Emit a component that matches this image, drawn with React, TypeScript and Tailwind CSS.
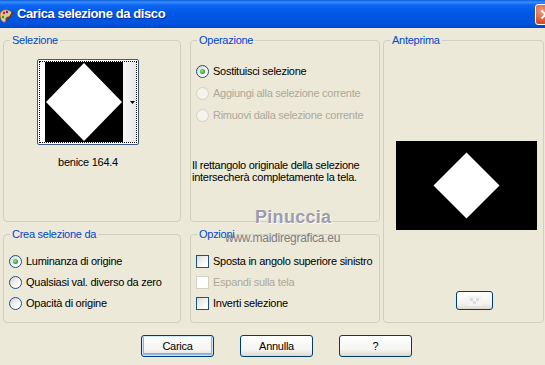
import clsx from "clsx";

const ui = "font-['Liberation_Sans',Arial,sans-serif] text-[11px] tracking-[-0.27px]";

function Radio({ label, checked, disabled }: { label: string; checked?: boolean; disabled?: boolean }) {
  return (
    <div className="flex h-[14px] items-center gap-[4px]">
      <span
        className={clsx(
          "flex size-[13px] shrink-0 items-center justify-center rounded-full border",
          disabled ? "border-[#d4d1c3] bg-[#f4f3ec]" : "border-[#1c5180] bg-[linear-gradient(135deg,#d8d5cb,#ffffff_75%)]",
        )}
      >
        {checked && <span className="size-[5px] rounded-full bg-[radial-gradient(circle_at_40%_40%,#9be69b,#21a121_70%)]" />}
      </span>
      <span className={clsx("whitespace-nowrap leading-[13px]", disabled ? "text-[#aca899]" : "text-black")}>{label}</span>
    </div>
  );
}

function Check({ label, disabled }: { label: string; disabled?: boolean }) {
  return (
    <div className="flex h-[14px] items-center gap-[4px]">
      <span
        className={clsx(
          "size-[13px] shrink-0 border",
          disabled ? "border-[#d4d1c3] bg-white" : "border-[#1c5180] bg-[linear-gradient(135deg,#dcdcd7,#ffffff_80%)]",
        )}
      />
      <span className={clsx("whitespace-nowrap leading-[13px]", disabled ? "text-[#aca899]" : "text-black")}>{label}</span>
    </div>
  );
}

function Group({ title, className, children }: { title: string; className?: string; children: React.ReactNode }) {
  return (
    <fieldset className={clsx("rounded-[4px] border border-[#d0d0bf]", className)}>
      <legend className="ml-[6px] px-[2px] leading-[13px] text-[#0046d5]">{title}</legend>
      {children}
    </fieldset>
  );
}

function XpButton({ children, primary }: { children?: React.ReactNode; primary?: boolean }) {
  return (
    <button
      type="button"
      className={clsx(
        "flex h-[22px] w-[73px] items-center justify-center rounded-[3px] border border-[#003c74] bg-[linear-gradient(#ffffff,#f4f4f0_70%,#dcd8cc)] leading-[13px] text-black",
        primary && "shadow-[inset_0_0_0_1px_#cee7ff,inset_0_-1px_0_2px_#8eb0e8]",
      )}
    >
      {children}
    </button>
  );
}

function Diamond() {
  return (
    <svg width="78" height="80" viewBox="0 0 78 80" className="block">
      <rect width="78" height="80" fill="#000" />
      <polygon points="39,1 77,40 39,79 1,40" fill="#fff" />
    </svg>
  );
}

function TitleBar() {
  return (
    <div className="relative flex h-[28px] items-center bg-[linear-gradient(#0a5cd8,#3a8dff_2px,#0d66f0_5px,#0058e6_45%,#0053dd_85%,#0045c8)]">
      <svg width="16" height="16" viewBox="0 0 16 16" className="ml-[-2px] mt-[1px]">
        <path d="M2 8c0-4 4-6 8-5s5 4 3 6-4 0-5 2 1 3-1 4-5-2-5-7z" fill="#e9c48a" stroke="#8a5a2a" strokeWidth="0.8" />
        <circle cx="6" cy="6" r="1.3" fill="#e02020" />
        <circle cx="9" cy="5" r="1.2" fill="#2040e0" />
        <circle cx="5" cy="10" r="1.2" fill="#20a020" />
        <path d="M9 14l6-9" stroke="#5a3a1a" strokeWidth="1.4" />
      </svg>
      <span className="ml-[3px] font-['Liberation_Sans',Arial,sans-serif] text-[13px] font-bold tracking-[-0.4px] text-white [text-shadow:1px_1px_0_#0a2a9a]">
        Carica selezione da disco
      </span>
      <div className="absolute left-[535px] top-[4px] flex h-[21px] w-[21px] items-center justify-center rounded-[3px] border border-white bg-[radial-gradient(circle_at_30%_30%,#f09a78,#d8532c_60%,#c0401a)]">
        <svg width="11" height="11" viewBox="0 0 11 11">
          <path d="M1.5 1.5l8 8M9.5 1.5l-8 8" stroke="#fff" strokeWidth="2" />
        </svg>
      </div>
    </div>
  );
}

export default function App() {
  return (
    <div className={clsx("relative h-[365px] w-[545px] overflow-hidden bg-[#ece9d8] text-black", ui)}>
      <TitleBar />
      <div className="pl-[3px] pt-[6px]">
        <div className="grid grid-cols-[178px_199px_164px] grid-rows-[188px_95px] gap-y-[6px]">
          <Group title="Selezione">
            <div className="ml-[33px] mt-[12px] flex w-[102px] flex-col items-center">
              <div className="h-[86px] w-[102px] rounded-[2px] border border-[#3c5a80] bg-white p-[1px]">
                <div className="flex h-full border border-dotted border-black">
                  <div className="w-[5px] bg-white" />
                  <Diamond />
                  <div className="flex flex-1 items-center justify-end bg-[linear-gradient(90deg,#f6f6f4,#e9e9e6)] pr-[1px]">
                    <svg width="5" height="3" viewBox="0 0 5 3">
                      <path d="M0 0h5L2.5 3z" fill="#000" />
                    </svg>
                  </div>
                </div>
              </div>
              <div className="mt-[11px] leading-[13px]">benice 164.4</div>
            </div>
          </Group>

          <Group title="Operazione" className="ml-[9px]">
            <div className="flex flex-col gap-[8px] pl-[5px] pt-[17px]">
              <Radio label="Sostituisci selezione" checked />
              <Radio label="Aggiungi alla selezione corrente" disabled />
              <Radio label="Rimuovi dalla selezione corrente" disabled />
            </div>
            <p className="mt-[37px] pl-[1px] leading-[12px]">
              Il rettangolo originale della selezione
              <br />
              intersecherà completamente la tela.
            </p>
          </Group>

          <Group title="Anteprima" className="row-span-2 ml-[3px]">
            <div className="ml-[12px] mt-[94px] h-[89px] w-[141px] bg-black">
              <svg width="141" height="89" viewBox="0 0 141 89" className="block">
                <polygon points="70.5,11.5 103.5,44.5 70.5,77.5 37.5,44.5" fill="#fff" />
              </svg>
            </div>
            <div className="ml-[72px] mt-[61px] flex h-[19px] w-[37px] items-center justify-center rounded-[3px] border border-[#003c74] bg-[linear-gradient(#ffffff,#f2f2ee_70%,#dedad0)]">
              <svg width="14" height="10" viewBox="0 0 14 10">
                <rect x="0" y="0" width="14" height="10" fill="#f4f4f4" />
                <rect x="2" y="2" width="3" height="3" fill="#dcdcdc" />
                <rect x="8" y="2" width="3" height="3" fill="#dcdcdc" />
                <rect x="5" y="5" width="3" height="3" fill="#dcdcdc" />
              </svg>
            </div>
          </Group>

          <Group title="Crea selezione da">
            <div className="flex flex-col gap-[7px] pl-[5px] pt-[13px]">
              <Radio label="Luminanza di origine" checked />
              <Radio label="Qualsiasi val. diverso da zero" />
              <Radio label="Opacità di origine" />
            </div>
          </Group>

          <Group title="Opzioni" className="ml-[9px]">
            <div className="flex flex-col gap-[7px] pl-[5px] pt-[13px]">
              <Check label="Sposta in angolo superiore sinistro" />
              <Check label="Espandi sulla tela" disabled />
              <Check label="Inverti selezione" />
            </div>
          </Group>
        </div>

        <div className="ml-[138px] mt-[12px] flex gap-[26px]">
          <XpButton primary>Carica</XpButton>
          <XpButton>Annulla</XpButton>
          <XpButton>?</XpButton>
        </div>
      </div>

      <div className="pointer-events-none absolute left-[255px] top-[204px] font-['Liberation_Sans',Arial,sans-serif] text-[18px] font-bold tracking-[0.3px] text-[#9c9cae] [text-shadow:1px_1px_0_#ffffff]">
        Pinuccia
      </div>
      <div className="pointer-events-none absolute left-[225px] top-[229px] font-['Liberation_Sans',Arial,sans-serif] text-[12px] text-[#7c7c88]">
        www.maidiregrafica.eu
      </div>
    </div>
  );
}
